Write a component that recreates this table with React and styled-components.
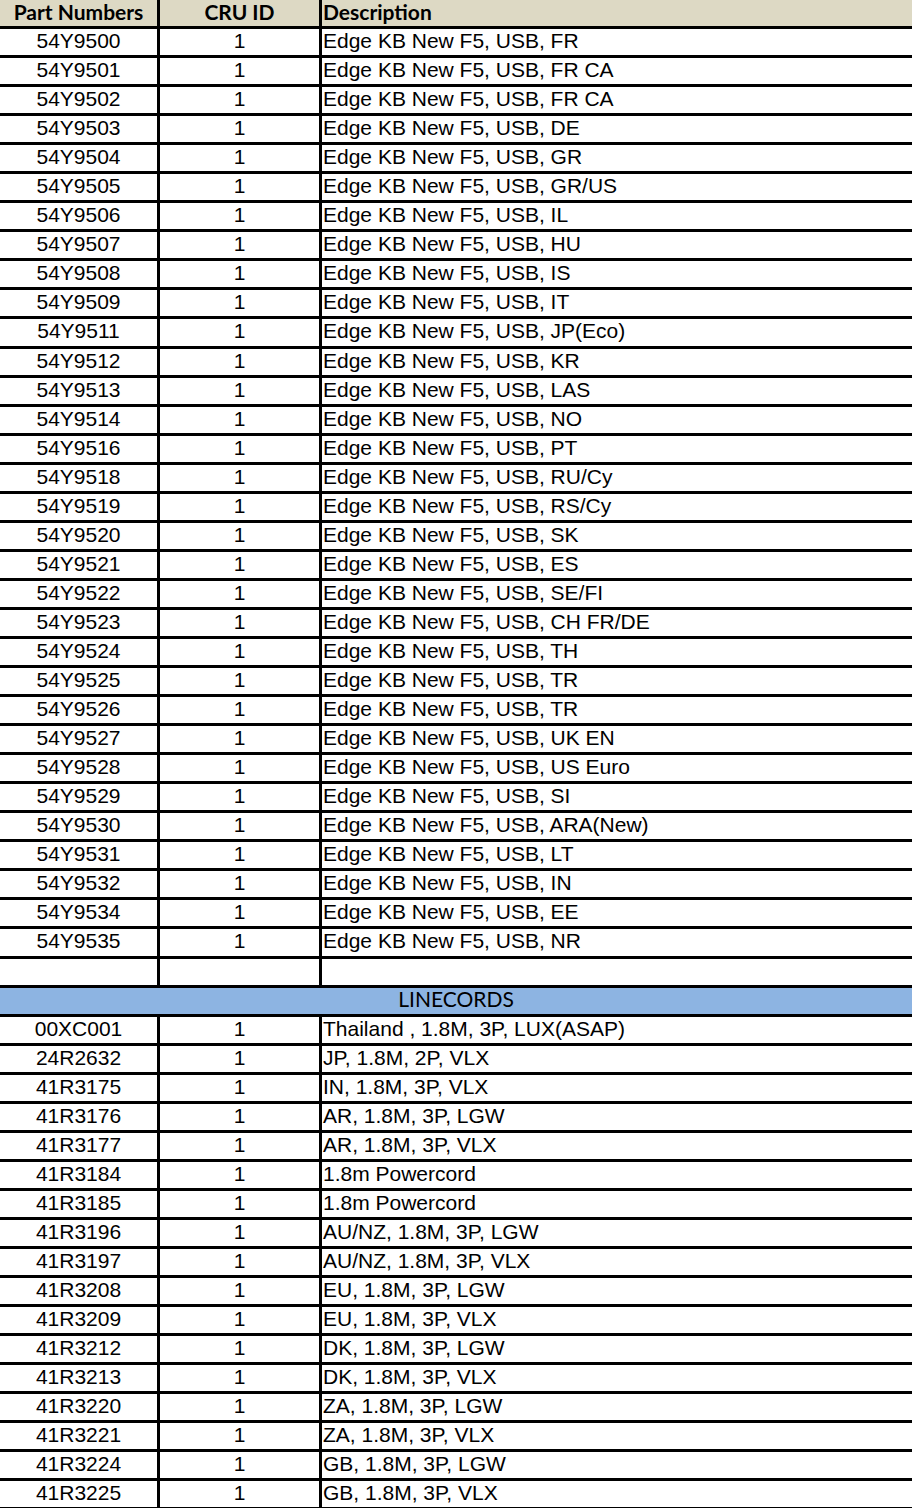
import React from "react";
import styled, { createGlobalStyle } from "styled-components";

const GlobalStyle = createGlobalStyle`
  html, body {
    margin: 0;
    padding: 0;
    background: #ffffff;
  }
`;

const keyboards = [
  ["54Y9500", "FR"], ["54Y9501", "FR CA"], ["54Y9502", "FR CA"], ["54Y9503", "DE"],
  ["54Y9504", "GR"], ["54Y9505", "GR/US"], ["54Y9506", "IL"], ["54Y9507", "HU"],
  ["54Y9508", "IS"], ["54Y9509", "IT"], ["54Y9511", "JP(Eco)"], ["54Y9512", "KR"],
  ["54Y9513", "LAS"], ["54Y9514", "NO"], ["54Y9516", "PT"], ["54Y9518", "RU/Cy"],
  ["54Y9519", "RS/Cy"], ["54Y9520", "SK"], ["54Y9521", "ES"], ["54Y9522", "SE/FI"],
  ["54Y9523", "CH FR/DE"], ["54Y9524", "TH"], ["54Y9525", "TR"], ["54Y9526", "TR"],
  ["54Y9527", "UK EN"], ["54Y9528", "US Euro"], ["54Y9529", "SI"], ["54Y9530", "ARA(New)"],
  ["54Y9531", "LT"], ["54Y9532", "IN"], ["54Y9534", "EE"], ["54Y9535", "NR"],
];

const linecords = [
  ["00XC001", "Thailand , 1.8M, 3P, LUX(ASAP)"],
  ["24R2632", "JP, 1.8M, 2P, VLX"],
  ["41R3175", "IN, 1.8M, 3P, VLX"],
  ["41R3176", "AR, 1.8M, 3P, LGW"],
  ["41R3177", "AR, 1.8M, 3P, VLX"],
  ["41R3184", "1.8m Powercord"],
  ["41R3185", "1.8m Powercord"],
  ["41R3196", "AU/NZ, 1.8M, 3P, LGW"],
  ["41R3197", "AU/NZ, 1.8M, 3P, VLX"],
  ["41R3208", "EU, 1.8M, 3P, LGW"],
  ["41R3209", "EU, 1.8M, 3P, VLX"],
  ["41R3212", "DK, 1.8M, 3P, LGW"],
  ["41R3213", "DK, 1.8M, 3P, VLX"],
  ["41R3220", "ZA, 1.8M, 3P, LGW"],
  ["41R3221", "ZA, 1.8M, 3P, VLX"],
  ["41R3224", "GB, 1.8M, 3P, LGW"],
  ["41R3225", "GB, 1.8M, 3P, VLX"],
];

const Sheet = styled.div`
  width: 912px;
  height: 1508px;
  overflow: hidden;
  background: #ffffff;
  color: #000000;
`;

const Row = styled.div`
  display: grid;
  grid-template-columns: 160px 162px 1fr;
  height: ${(p) => (p.$header ? "26px" : "26.06px")};
  border-bottom: 3px solid #000000;
  background: ${(p) => (p.$header ? "#ddd9c4" : "#ffffff")};
`;

const Cell = styled.div`
  display: flex;
  align-items: center;
  justify-content: ${(p) => (p.$left ? "flex-start" : "center")};
  padding-left: ${(p) => (p.$left ? "1px" : "0")};
  padding-bottom: ${(p) => (p.$head ? "3px" : "2px")};
  border-right: ${(p) => (p.$last ? "none" : "3px solid #000000")};
  font-family: ${(p) =>
    p.$head ? '"Lato", "Open Sans", sans-serif' : '"Liberation Sans", Arial, sans-serif'};
  font-weight: ${(p) => (p.$head ? 700 : 400)};
  font-size: 21px;
  white-space: nowrap;
  overflow: hidden;
`;

const SectionRow = styled.div`
  display: flex;
  align-items: center;
  justify-content: center;
  height: 22.06px;
  padding-bottom: 4px;
  border-bottom: 3px solid #000000;
  background: #8db4e2;
  font-family: "Lato", "Open Sans", sans-serif;
  font-size: 21px;
`;

const DataRow = ({ part, id, desc }) => (
  <Row>
    <Cell>{part}</Cell>
    <Cell>{id}</Cell>
    <Cell $left $last>{desc}</Cell>
  </Row>
);

export default function App() {
  return (
    <>
      <GlobalStyle />
      <Sheet>
        <Row $header>
          <Cell $head>Part Numbers</Cell>
          <Cell $head>CRU ID</Cell>
          <Cell $head $left $last>Description</Cell>
        </Row>
        {keyboards.map(([part, lang]) => (
          <DataRow key={part} part={part} id="1" desc={`Edge KB New F5, USB, ${lang}`} />
        ))}
        <DataRow part="" id="" desc="" />
        <SectionRow>LINECORDS</SectionRow>
        {linecords.map(([part, desc]) => (
          <DataRow key={part} part={part} id="1" desc={desc} />
        ))}
      </Sheet>
    </>
  );
}
